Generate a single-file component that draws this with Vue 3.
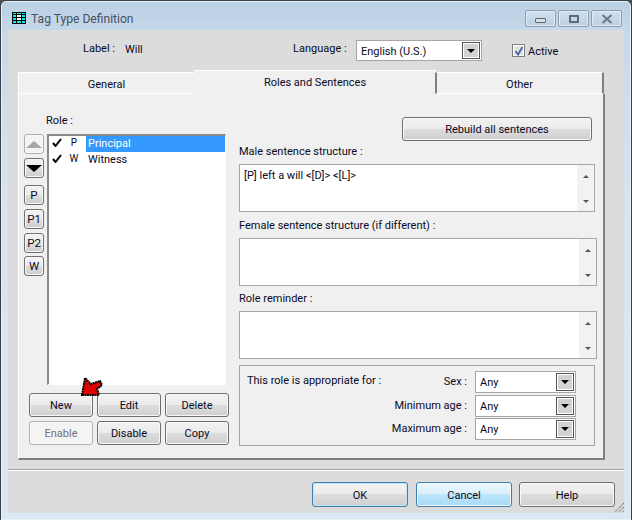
<script setup>
const sideButtons = ['P', 'P1', 'P2', 'W']
const roles = [
  { code: 'P', name: 'Principal', selected: true },
  { code: 'W', name: 'Witness', selected: false }
]
const actions = [
  { label: 'New' }, { label: 'Edit' }, { label: 'Delete' },
  { label: 'Enable', disabled: true }, { label: 'Disable' }, { label: 'Copy' }
]
const ranges = [
  { label: 'Sex :', value: 'Any' },
  { label: 'Minimum age :', value: 'Any' },
  { label: 'Maximum age :', value: 'Any' }
]
const sentenceBoxes = [
  { label: 'Male sentence structure :', text: '[P] left a will <[D]> <[L]>', cls: 'male' },
  { label: 'Female sentence structure (if different) :', text: '', cls: 'female' },
  { label: 'Role reminder :', text: '', cls: 'reminder' }
]
</script>

<template>
  <div class="window">
    <header class="titlebar">
      <svg class="app-icon" width="14" height="12" viewBox="0 0 14 12">
        <rect x="0" y="0" width="14" height="12" fill="#000" />
        <rect x="1" y="1" width="12" height="10" fill="#19e6e6" />
        <path d="M1 2.5H13M1 5.5H13M1 8.5H13M4.5 1V11M9.5 1V11" stroke="#000" />
        <rect x="5" y="3" width="4" height="2" fill="#fff" />
        <rect x="5" y="6" width="4" height="2" fill="#fff" />
      </svg>
      <span class="title">Tag Type Definition</span>
      <div class="win-buttons">
        <span class="win-btn"><i class="min-glyph"></i></span>
        <span class="win-btn"><i class="max-glyph"></i></span>
        <span class="win-btn">
          <svg width="12" height="10" viewBox="0 0 12 10"><path d="M1.5 1 L10.5 9 M10.5 1 L1.5 9" stroke="#6c7987" stroke-width="2" /></svg>
        </span>
      </div>
    </header>

    <main class="client">
      <div class="head-row">
        <span class="lbl label-lbl">Label :</span>
        <span class="will">Will</span>
        <span class="lbl lang-lbl">Language :</span>
        <div class="combo lang-combo"><span>English (U.S.)</span><b class="drop"><i></i></b></div>
        <span class="check">
          <svg width="10" height="10" viewBox="0 0 10 10"><path d="M1.5 5 L4 8.5 L8.5 1" fill="none" stroke="#4a6fb0" stroke-width="2" /></svg>
        </span>
        <span class="lbl">Active</span>
      </div>

      <nav class="tabs">
        <div class="tab general">General</div>
        <div class="tab active">Roles and Sentences</div>
        <div class="tab other">Other</div>
      </nav>

      <section class="panel">
        <div class="left-col">
          <div class="lbl role-lbl">Role :</div>
          <div class="list-row">
            <div class="side">
              <button class="btn arrow-btn disabled"><i class="up"></i></button>
              <button class="btn arrow-btn down-btn"><i class="down"></i></button>
              <button v-for="b in sideButtons" :key="b" class="btn side-btn">{{ b }}</button>
            </div>
            <div class="list">
              <div v-for="r in roles" :key="r.code" class="role">
                <svg class="tick" width="10" height="9" viewBox="0 0 10 9"><path d="M1 5 L3.5 8 L9 1" fill="none" stroke="#000" stroke-width="2" /></svg>
                <span class="code">{{ r.code }}</span>
                <span class="name" :class="{ selected: r.selected }">{{ r.name }}</span>
              </div>
            </div>
          </div>
          <div class="actions">
            <button v-for="a in actions" :key="a.label" class="btn" :class="{ disabled: a.disabled }">{{ a.label }}</button>
          </div>
        </div>

        <div class="right-col">
          <button class="btn rebuild">Rebuild all sentences</button>
          <template v-for="s in sentenceBoxes" :key="s.cls">
            <div class="lbl box-lbl" :class="s.cls + '-lbl'">{{ s.label }}</div>
            <div class="textbox" :class="s.cls">
              <span class="tb-text">{{ s.text }}</span>
              <div class="scroll"><i class="s-up"></i><i class="s-down"></i></div>
            </div>
          </template>
          <div class="group">
            <div class="lbl group-title">This role is appropriate for :</div>
            <div class="ranges">
              <template v-for="r in ranges" :key="r.label">
                <span class="lbl range-lbl">{{ r.label }}</span>
                <div class="combo range-combo"><span>{{ r.value }}</span><b class="drop"><i></i></b></div>
              </template>
            </div>
          </div>
        </div>

        <svg class="pointer" width="24" height="24" viewBox="0 0 24 24">
          <path d="M2 19 L5 2 L11 8 L20 5 L22 9 L17 13 L19 19 Z" fill="#e00000" stroke="#000" stroke-width="2" stroke-dasharray="2 0.5" />
        </svg>
      </section>

      <div class="separator"></div>

      <footer class="footer">
        <button class="btn foot default">OK</button>
        <button class="btn foot hover">Cancel</button>
        <button class="btn foot help">Help</button>
      </footer>
      <svg class="grip" width="12" height="12" viewBox="0 0 12 12">
        <path d="M11 2 L2 11 M11 6 L6 11 M11 10 L10 11" stroke="#8a8a8a" stroke-width="1.2" stroke-dasharray="1.4 0.6" />
      </svg>
    </main>
  </div>
</template>

<style>
html, body { margin: 0; background: #4a4f55; }
</style>

<style scoped>
* { box-sizing: border-box; }
.window {
  width: 632px; height: 520px;
  border: 1px solid #3c4045; border-bottom: 0;
  border-radius: 6px 6px 0 0;
  box-shadow: inset 0 0 0 1px #e8f0f7;
  background: linear-gradient(#b9cfe3 0, #c6d9ea 30px, #d6e4f1 200px, #dbe7f3 100%);
  padding: 0 7px 7px;
  display: flex; flex-direction: column;
  font: 11px/16px Roboto, "Liberation Sans", Arial, sans-serif;
  color: #0a0a1e;
  overflow: hidden;
}
.titlebar { height: 29px; flex: none; display: flex; align-items: flex-start; padding-left: 4px; }
.app-icon { margin-right: 5px; margin-top: 11px; flex: none; }
.title { font-size: 12.1px; line-height: 16px; color: #46505f; margin-top: 10px; }
.win-buttons { margin-left: auto; display: flex; gap: 2px; margin-right: 2px; padding-top: 9px; }
.win-btn {
  width: 31px; height: 17px; border: 1px solid #8c9db0; border-radius: 2px;
  background: linear-gradient(#cfdfee, #bccfe2);
  box-shadow: inset 0 0 0 1px #dfeaf4;
  display: flex; align-items: center; justify-content: center;
}
.min-glyph { width: 11px; height: 5px; margin-top: 3px; border: 1px solid #5d6a78; background: #d8dfe6; border-radius: 1px; }
.max-glyph { width: 10px; height: 8px; border: 2px solid #5d6a78; border-radius: 1px; }

.client { flex: 1; min-height: 0; background: #dcdcdc; position: relative; display: flex; flex-direction: column; width: 616px; }

.lbl { white-space: nowrap; line-height: 18px; }
.head-row { height: 42px; flex: none; display: flex; align-items: flex-start; padding-top: 10px; position: relative; }
.head-row > .lbl, .will { line-height: 16px; margin-top: 1px; }
.label-lbl { margin-left: 75px; width: 42px; }
.will { width: 168px; margin-top: 2px !important; }
.lang-lbl { width: 63px; }
.combo { background: #fff; border: 1px solid #a6a6a6; box-shadow: inset 0 0 0 1px #fff; display: flex; align-items: center; position: relative; padding: 2px 0 0 4px; }
.lang-combo { width: 126px; height: 21px; margin-right: 30px; }
.drop {
  position: absolute; right: 1px; top: 1px; bottom: 1px; width: 18px;
  border: 1px solid #555; box-shadow: inset 0 0 0 1px #fff; background: #d2d2d2;
  display: flex; align-items: center; justify-content: center;
}
.drop i { border: 4px solid transparent; border-top: 4px solid #000; border-bottom: 0; }
.check { width: 13px; height: 13px; margin: 4px 3px 0 0; border: 1px solid #7f7f7f; background: #e4e4e4; box-shadow: inset 0 0 0 1px #fff; display: flex; align-items: center; justify-content: center; }
.head-row > .check + .lbl { margin-top: 4px; }

.tabs { height: 24px; flex: none; display: flex; align-items: flex-end; margin-left: 10px; margin-top: -2px; position: relative; z-index: 1; }
.tab { height: 22px; text-align: center; line-height: 23px; background: #f0f0f0; border-top: 1px solid #fff; border-bottom: 1px solid #fff; }
.general { width: 176px; border-left: 1px solid #fff; }
.active { width: 242px; height: 25px; margin-bottom: -1px; line-height: 24px; border-bottom: 0; }
.other { width: 169px; border-right: 2px solid #808080; border-left: 2px solid #808080; margin-left: -1px; }

.panel {
  flex: none; height: 366px; width: 587px; margin-left: 10px;
  background: #f0f0f0; border-left: 1px solid #fff; border-right: 2px solid #808080; border-bottom: 2px solid #808080;
  padding: 18px 0 0 5px; display: flex; gap: 10px; position: relative;
}
.left-col { width: 205px; flex: none; }
.role-lbl { margin-left: 22px; height: 16px; margin-bottom: 6px; }
.list-row { display: flex; gap: 3px; height: 251px; }
.side { width: 20px; flex: none; display: flex; flex-direction: column; }
.btn {
  font: inherit; color: inherit; padding: 2px 0 0;
  border: 1px solid #707070; border-radius: 3px;
  background: linear-gradient(#f2f2f2 0, #ebebeb 48%, #dddddd 50%, #cfcfcf 100%);
  box-shadow: inset 0 0 0 1px #f7f7f7;
}
.btn.disabled { border-color: #b0b0b0; color: #70707a; background: #f4f4f4; }
.side .btn { width: 20px; height: 20px; display: flex; align-items: center; justify-content: center; font-size: 11.5px; padding: 0; }
.arrow-btn i { display: block; border: 8px solid transparent; }
.up { border-bottom: 7px solid #a8a8a8 !important; border-top: 0 !important; }
.down { border-top: 7px solid #000 !important; border-bottom: 0 !important; }
.down-btn { margin-top: 4px; }
.down-btn + .side-btn { margin-top: 7px; }
.side-btn + .side-btn { margin-top: 4px; }
.side-btn:last-child { margin-top: 3px; }
.list { width: 179px; flex: none; background: #fff; border: 1px solid #fff; border-top: 2px solid #8a8a8a; border-left: 2px solid #8a8a8a; }
.role { height: 16px; display: flex; align-items: center; }
.tick { margin-left: 3px; flex: none; margin-top: -3px; }
.code { width: 24px; font-size: 10px; text-align: center; flex: none; margin-top: -3px; }
.name { flex: 1; padding-left: 2px; line-height: 15px; height: 16px; }
.name.selected { background: #3399ff; color: #fff; }
.actions { margin: 8px 0 0 5px; display: grid; grid-template-columns: repeat(3, 64px); grid-auto-rows: 24px; gap: 4px; }

.right-col { width: 358px; flex: none; padding-top: 5px; }
.rebuild { display: block; margin-left: 163px; width: 190px; height: 24px; }
.box-lbl { height: 16px; margin-bottom: 5px; }
.male-lbl { margin-top: 2px; }
.female-lbl { margin-top: 5px; }
.reminder-lbl { margin-top: 4px; }
.textbox { height: 48px; background: #fff; border: 1px solid #a6a6a6; position: relative; padding: 3px 4px; }
.textbox.male { width: 356px; }
.scroll { position: absolute; right: 0; top: 0; bottom: 0; width: 17px; background: #f2f2f2; display: flex; flex-direction: column; justify-content: space-between; align-items: center; padding: 10px 0 8px; }
.scroll i { border: 3px solid transparent; }
.s-up { border-bottom: 3px solid #555 !important; border-top: 0 !important; }
.s-down { border-top: 3px solid #555 !important; border-bottom: 0 !important; }
.group { margin-top: 6px; width: 356px; height: 81px; border: 1px solid #a6a6a6; position: relative; padding: 5px 0 0 7px; display: flex; justify-content: space-between; }
.group-title { line-height: 20px; }
.ranges { display: grid; grid-template-columns: auto 101px; column-gap: 8px; row-gap: 1.5px; grid-auto-rows: 22px; margin-right: 18px; justify-items: end; }
.range-lbl { line-height: 22px; }
.range-combo { width: 101px; height: 22px; }

.pointer { position: absolute; left: 61px; top: 282px; }

.separator { height: 2px; margin-top: 9px; flex: none; border-top: 1px solid #a0a0a0; border-bottom: 1px solid #fff; }
.footer { display: flex; justify-content: flex-end; gap: 8px; padding: 11px 9px 0 0; }
.foot { width: 96px; height: 25px; }
.help { margin-left: -1px; }
.default { border-color: #3c7fb1; box-shadow: inset 0 0 0 1px #bfe6f7; }
.hover { border-color: #3c7fb1; background: linear-gradient(#eaf6fd 0, #d9f0fc 48%, #bee6fd 50%, #a7d9f5 100%); }
.grip { position: absolute; right: -1px; bottom: 0; }
</style>
